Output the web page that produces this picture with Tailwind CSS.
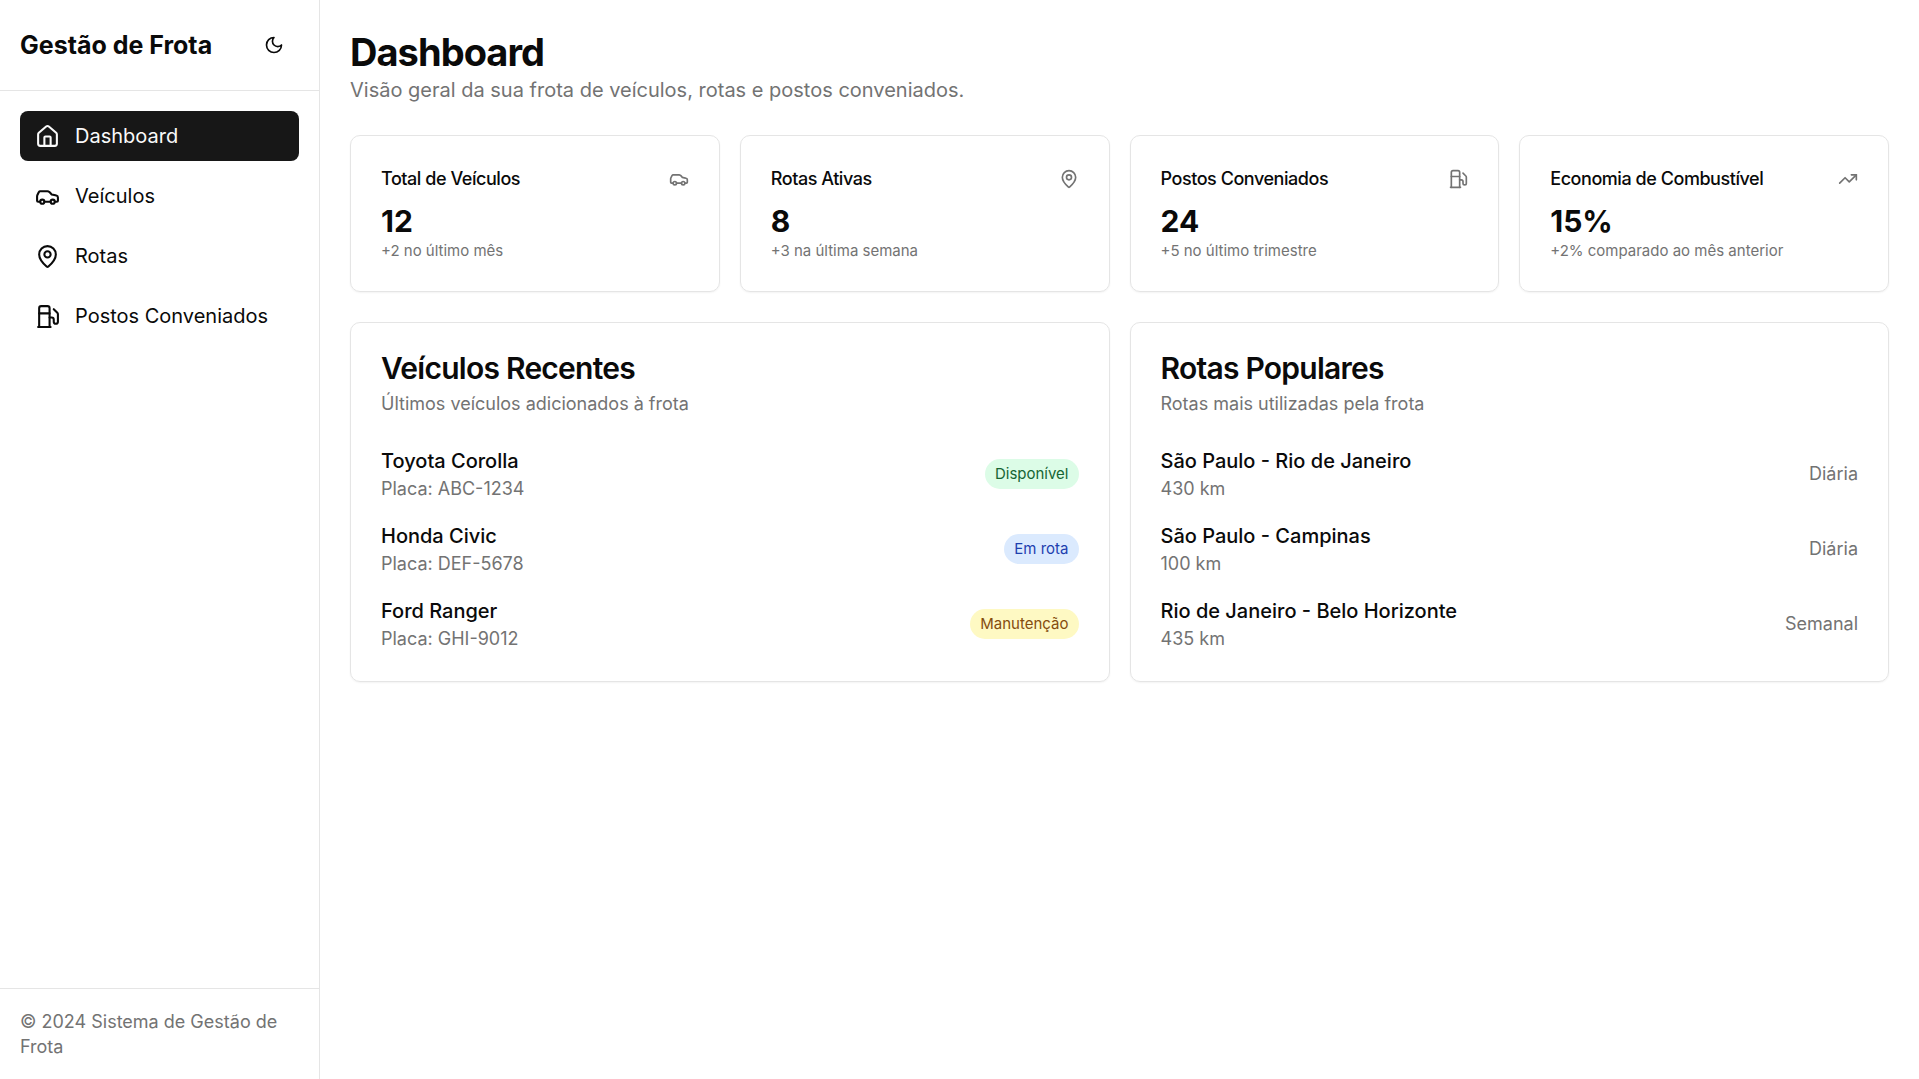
<!DOCTYPE html>
<html lang="pt-BR">
<head>
<meta charset="utf-8">
<meta name="viewport" content="width=device-width, initial-scale=1">
<title>Gestão de Frota</title>
<script src="https://cdn.jsdelivr.net/npm/@tailwindcss/browser@4"></script>
</head>
<body class="flex min-h-screen bg-white font-['Inter',sans-serif] text-[20px] leading-[30px] text-[#0a0a0a]">
<svg class="hidden" aria-hidden="true">
  <symbol id="car" viewBox="0 0 24 24"><path d="M19 17h2c.6 0 1-.4 1-1v-3c0-.9-.7-1.7-1.5-1.9C18.7 10.6 16 10 16 10s-1.300-1.400-2.200-2.300c-.5-.4-1.100-.7-1.800-.7H5c-.6 0-1.100.4-1.400.9l-1.400 2.900A3.700 3.700 0 0 0 2 12v4c0 .6.4 1 1 1h2"/><circle cx="7" cy="17" r="2"/><path d="M9 17h6"/><circle cx="17" cy="17" r="2"/></symbol>
  <symbol id="pin" viewBox="0 0 24 24"><path d="M20 10c0 4.993-5.539 10.193-7.399 11.799a1 1 0 0 1-1.202 0C9.539 20.193 4 14.993 4 10a8 8 0 0 1 16 0"/><circle cx="12" cy="10" r="3"/></symbol>
  <symbol id="fuel" viewBox="0 0 24 24"><path d="M3 22h12"/><path d="M4 9h10"/><path d="M14 22V4a2 2 0 0 0-2-2H6a2 2 0 0 0-2 2v18"/><path d="M14 13h2a2 2 0 0 1 2 2v2a2 2 0 0 0 4 0V9.830a2 2 0 0 0-.59-1.420L18 5"/></symbol>
</svg>

<aside class="sticky top-0 flex h-screen w-80 shrink-0 flex-col border-r border-neutral-200">
  <div class="flex items-center justify-between border-b border-neutral-200 p-5">
    <span class="text-[25px] leading-[35px] font-bold">Gestão de Frota</span>
    <button type="button" aria-label="Alternar tema" class="flex size-12.5 items-center justify-center rounded-lg">
      <svg class="size-5" viewBox="0 0 24 24" fill="none" stroke="currentColor" stroke-width="2" stroke-linecap="round" stroke-linejoin="round"><path d="M12 3a6 6 0 0 0 9 9 9 9 0 1 1-9-9Z"/></svg>
    </button>
  </div>
  <nav class="flex flex-1 flex-col gap-2.5 p-5">
    <a href="#" aria-current="page" class="flex items-center gap-3.75 rounded-lg bg-neutral-900 px-3.75 py-2.5 text-neutral-50">
      <svg class="size-6.25" viewBox="0 0 24 24" fill="none" stroke="currentColor" stroke-width="2" stroke-linecap="round" stroke-linejoin="round"><path d="M15 21v-8a1 1 0 0 0-1-1h-4a1 1 0 0 0-1 1v8"/><path d="M3 10a2 2 0 0 1 .709-1.528l7-5.999a2 2 0 0 1 2.582 0l7 5.999A2 2 0 0 1 21 10v9a2 2 0 0 1-2 2H5a2 2 0 0 1-2-2z"/></svg>
      <span>Dashboard</span>
    </a>
    <a href="#veiculos" class="flex items-center gap-3.75 rounded-lg px-3.75 py-2.5">
      <svg class="size-6.25" fill="none" stroke="currentColor" stroke-width="2" stroke-linecap="round" stroke-linejoin="round"><use href="#car"/></svg>
      <span>Veículos</span>
    </a>
    <a href="#rotas" class="flex items-center gap-3.75 rounded-lg px-3.75 py-2.5">
      <svg class="size-6.25" fill="none" stroke="currentColor" stroke-width="2" stroke-linecap="round" stroke-linejoin="round"><use href="#pin"/></svg>
      <span>Rotas</span>
    </a>
    <a href="#postos" class="flex items-center gap-3.75 rounded-lg px-3.75 py-2.5">
      <svg class="size-6.25" fill="none" stroke="currentColor" stroke-width="2" stroke-linecap="round" stroke-linejoin="round"><use href="#fuel"/></svg>
      <span>Postos Conveniados</span>
    </a>
  </nav>
  <footer class="border-t border-neutral-200 p-5 text-[18px] leading-[25px] text-[#737373]">© 2024 Sistema de Gestão de Frota</footer>
</aside>

<main class="flex min-w-0 flex-1 flex-col gap-7.5 p-7.5">
  <header>
    <h1 class="text-[38px] leading-[45px] font-bold tracking-tight">Dashboard</h1>
    <p class="text-[#737373]">Visão geral da sua frota de veículos, rotas e postos conveniados.</p>
  </header>

  <section class="grid grid-cols-2 gap-5 xl:grid-cols-4" aria-label="Indicadores">
    <article class="rounded-[10px] border border-neutral-200 p-7.5 shadow-xs">
      <div class="flex items-center justify-between pb-2.5">
        <h2 class="text-[18px] leading-[25px] font-medium tracking-tight">Total de Veículos</h2>
        <svg class="size-5 text-[#737373]" fill="none" stroke="currentColor" stroke-width="2" stroke-linecap="round" stroke-linejoin="round"><use href="#car"/></svg>
      </div>
      <p class="text-[30px] leading-[40px] font-bold">12</p>
      <p class="text-[15px] leading-[20px] text-[#737373]">+2 no último mês</p>
    </article>
    <article class="rounded-[10px] border border-neutral-200 p-7.5 shadow-xs">
      <div class="flex items-center justify-between pb-2.5">
        <h2 class="text-[18px] leading-[25px] font-medium tracking-tight">Rotas Ativas</h2>
        <svg class="size-5 text-[#737373]" fill="none" stroke="currentColor" stroke-width="2" stroke-linecap="round" stroke-linejoin="round"><use href="#pin"/></svg>
      </div>
      <p class="text-[30px] leading-[40px] font-bold">8</p>
      <p class="text-[15px] leading-[20px] text-[#737373]">+3 na última semana</p>
    </article>
    <article class="rounded-[10px] border border-neutral-200 p-7.5 shadow-xs">
      <div class="flex items-center justify-between pb-2.5">
        <h2 class="text-[18px] leading-[25px] font-medium tracking-tight">Postos Conveniados</h2>
        <svg class="size-5 text-[#737373]" fill="none" stroke="currentColor" stroke-width="2" stroke-linecap="round" stroke-linejoin="round"><use href="#fuel"/></svg>
      </div>
      <p class="text-[30px] leading-[40px] font-bold">24</p>
      <p class="text-[15px] leading-[20px] text-[#737373]">+5 no último trimestre</p>
    </article>
    <article class="rounded-[10px] border border-neutral-200 p-7.5 shadow-xs">
      <div class="flex items-center justify-between pb-2.5">
        <h2 class="text-[18px] leading-[25px] font-medium tracking-tight">Economia de Combustível</h2>
        <svg class="size-5 text-[#737373]" viewBox="0 0 24 24" fill="none" stroke="currentColor" stroke-width="2" stroke-linecap="round" stroke-linejoin="round"><path d="M22 7 13.500 15.500 8.500 10.500 2 17"/><path d="M16 7h6v6"/></svg>
      </div>
      <p class="text-[30px] leading-[40px] font-bold">15%</p>
      <p class="text-[15px] leading-[20px] text-[#737373]">+2% comparado ao mês anterior</p>
    </article>
  </section>

  <section class="grid gap-5 lg:grid-cols-2">
    <article class="rounded-[10px] border border-neutral-200 p-7.5 shadow-xs">
      <h2 class="text-[30px] leading-[30px] font-semibold tracking-tight">Veículos Recentes</h2>
      <p class="mt-2 text-[18px] leading-[25px] text-[#737373]">Últimos veículos adicionados à frota</p>
      <ul class="mt-7.5 flex flex-col gap-5">
        <li class="flex items-center justify-between">
          <div>
            <p class="font-medium">Toyota Corolla</p>
            <p class="text-[18px] leading-[25px] text-[#737373]">Placa: ABC-1234</p>
          </div>
          <span class="rounded-full bg-[#dcfce7] px-2.5 py-1.25 text-[15px] leading-[20px] text-[#166534]">Disponível</span>
        </li>
        <li class="flex items-center justify-between">
          <div>
            <p class="font-medium">Honda Civic</p>
            <p class="text-[18px] leading-[25px] text-[#737373]">Placa: DEF-5678</p>
          </div>
          <span class="rounded-full bg-[#dbeafe] px-2.5 py-1.25 text-[15px] leading-[20px] text-[#1e40af]">Em rota</span>
        </li>
        <li class="flex items-center justify-between">
          <div>
            <p class="font-medium">Ford Ranger</p>
            <p class="text-[18px] leading-[25px] text-[#737373]">Placa: GHI-9012</p>
          </div>
          <span class="rounded-full bg-[#fef9c3] px-2.5 py-1.25 text-[15px] leading-[20px] text-[#854d0e]">Manutenção</span>
        </li>
      </ul>
    </article>
    <article class="rounded-[10px] border border-neutral-200 p-7.5 shadow-xs">
      <h2 class="text-[30px] leading-[30px] font-semibold tracking-tight">Rotas Populares</h2>
      <p class="mt-2 text-[18px] leading-[25px] text-[#737373]">Rotas mais utilizadas pela frota</p>
      <ul class="mt-7.5 flex flex-col gap-5">
        <li class="flex items-center justify-between">
          <div>
            <p class="font-medium">São Paulo - Rio de Janeiro</p>
            <p class="text-[18px] leading-[25px] text-[#737373]">430 km</p>
          </div>
          <span class="text-[18px] leading-[25px] text-[#737373]">Diária</span>
        </li>
        <li class="flex items-center justify-between">
          <div>
            <p class="font-medium">São Paulo - Campinas</p>
            <p class="text-[18px] leading-[25px] text-[#737373]">100 km</p>
          </div>
          <span class="text-[18px] leading-[25px] text-[#737373]">Diária</span>
        </li>
        <li class="flex items-center justify-between">
          <div>
            <p class="font-medium">Rio de Janeiro - Belo Horizonte</p>
            <p class="text-[18px] leading-[25px] text-[#737373]">435 km</p>
          </div>
          <span class="text-[18px] leading-[25px] text-[#737373]">Semanal</span>
        </li>
      </ul>
    </article>
  </section>
</main>
</body>
</html>
